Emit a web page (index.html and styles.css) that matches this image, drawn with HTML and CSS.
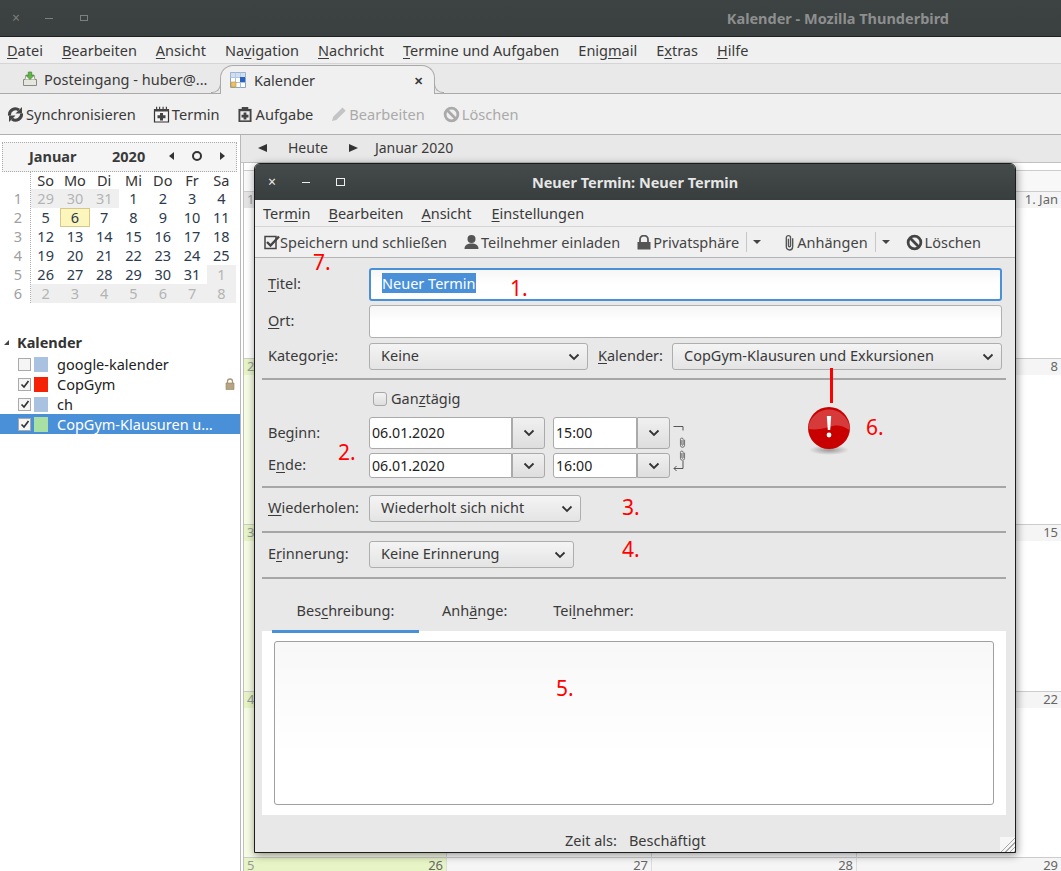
FILE: index.html
```html
<!DOCTYPE html>
<html lang="de">
<head>
    <meta charset="UTF-8">
    <title>Kalender - Mozilla Thunderbird</title>
    <link rel="stylesheet" href="styles.css">
</head>
<body>
    <svg class="defs" width="0" height="0">
        <symbol id="chev" viewBox="0 0 12 8"><path d="M1.5 1.5 6 6l4.5-4.5" fill="none" stroke="#333" stroke-width="1.8"/></symbol>
        <symbol id="nosign" viewBox="0 0 16 16"><circle cx="8" cy="8" r="6" fill="none" stroke="currentColor" stroke-width="2.6"/><path d="M3.8 3.8l8.4 8.4" stroke="currentColor" stroke-width="2.6"/></symbol>
        <symbol id="clip" viewBox="0 0 10 16"><path d="M8 4v8a3 3 0 0 1-6 0V3.500a2 2 0 0 1 4 0V11a1 1 0 0 1-2 0V4.500" fill="none" stroke="currentColor" stroke-width="1.300"/></symbol>
        <symbol id="check" viewBox="0 0 12 12"><path d="M2.5 6.5 5 9l4.5-6" fill="none" stroke="#333" stroke-width="1.7"/></symbol>
    </svg>

    <div class="titlebar">
        <div class="wm-buttons">
            <span class="wm-close">×</span><span class="wm-min"></span><span class="wm-max"></span>
        </div>
        <div class="app-title">Kalender - Mozilla Thunderbird</div>
    </div>

    <div class="menubar">
        <span><u>D</u>atei</span>
        <span><u>B</u>earbeiten</span>
        <span><u>A</u>nsicht</span>
        <span>Na<u>v</u>igation</span>
        <span><u>N</u>achricht</span>
        <span><u>T</u>ermine und Aufgaben</span>
        <span>Enig<u>m</u>ail</span>
        <span>E<u>x</u>tras</span>
        <span><u>H</u>ilfe</span>
    </div>

    <div class="tabbar">
        <div class="tab">
            <svg width="16" height="16" viewBox="0 0 16 16"><path d="M1.5 8.5h13v6h-13z" fill="#e6e6e0" stroke="#8a8a80"/><path d="M3 8.500 4 4h8l1 4.500" fill="#f4f4f0" stroke="#9a9a90"/><path d="M6.300 1h3.400v3.500H12L8 8.500 4 4.500h2.300z" fill="#63b54a" stroke="#3f8a2e" stroke-width=".7"/></svg>
            <span>Posteingang - huber@...</span>
        </div>
        <div class="tab tab-active">
            <svg width="16" height="16" viewBox="0 0 16 16"><path d="M.5.5h15v15H.5z" fill="#fff" stroke="#88a4c8"/><path d="M.5 5.500h15M.5 10.500h15M5.500.5v15M10.500.5v15" stroke="#a8c0dc"/><path d="M.5.5h15v5H.5z" fill="#bcd0e8" opacity=".7"/><path d="M10 5h5v5h-5z" fill="#2a62c4"/><path d="M1 10h5v5H1z" fill="#f0c060" stroke="#c09030" stroke-width=".6"/></svg>
            <span class="tab-label">Kalender</span>
            <span class="tab-close">✕</span>
        </div>
    </div>

    <div class="toolbar">
        <span class="tool tool-sync">
            <svg width="17" height="17" viewBox="0 0 17 17"><path d="M2.500 9.500a6 6 0 0 1 9.500-5.500M14.500 7.500a6 6 0 0 1-9.500 5.500" fill="none" stroke="#454545" stroke-width="3"/><path d="M15 1v6.500H8.500zM2 16V9.500h6.500z" fill="#454545"/></svg>
            Synchronisieren
        </span>
        <span class="tool">
            <svg width="17" height="17" viewBox="0 0 17 17"><path d="M1.500 3.500h14v12.500h-14z" fill="#f4f4f4" stroke="#333" stroke-width="1.200"/><path d="M1 3h15v2.500H1z" fill="#444"/><path d="M3 .8h1.200V3H3zM6 .8h1.200V3H6zM9.500.8h1.200V3H9.500zM12.800.8H14V3h-1.200z" fill="#444"/><path d="M7 7h3v2.300h2.500v3H10v2.200H7v-2.200H4.500v-3H7z" fill="#444"/></svg>
            Termin
        </span>
        <span class="tool tool-task">
            <svg width="14" height="17" viewBox="0 0 15 17"><path d="M.5 2.500h14v14H.5z" fill="#444"/><path d="M4 .5h7v3.800H4z" fill="#444"/><path d="M2.500 5h10v9.800h-10z" fill="#eee"/><path d="M6 6.300h3v2.500h2.200v3H9v2H6v-2H3.800v-3H6z" fill="#444"/></svg>
            Aufgabe
        </span>
        <span class="tool tool-off">
            <svg width="16" height="16" viewBox="0 0 16 16"><path d="M1 15l1.200-4.300L11.500 1.500l3.200 3.200L5.300 14z" fill="#c4c4c4"/></svg>
            Bearbeiten
        </span>
        <span class="tool tool-off">
            <svg width="17" height="17"><use href="#nosign"/></svg>
            Löschen
        </span>
    </div>

    <div class="main">
        <aside class="sidebar">
            <div class="minical-head">
                <span class="mc-month">Januar</span>
                <span class="mc-year">2020</span>
                <span class="mc-arrow mc-left"></span>
                <span class="mc-dot"></span>
                <span class="mc-arrow mc-right"></span>
            </div>
            <div class="minical">
                <div class="mc-weeks">
                    <span></span><span>1</span><span>2</span><span>3</span><span>4</span><span>5</span><span>6</span>
                </div>
                <div class="mc-days">
                    <b>So</b><b>Mo</b><b>Di</b><b>Mi</b><b>Do</b><b>Fr</b><b>Sa</b>
                    <i>29</i><i>30</i><i>31</i><span>1</span><span>2</span><span>3</span><span>4</span>
                    <span>5</span><span class="mc-today">6</span><span>7</span><span>8</span><span>9</span><span>10</span><span>11</span>
                    <span>12</span><span>13</span><span>14</span><span>15</span><span>16</span><span>17</span><span>18</span>
                    <span>19</span><span>20</span><span>21</span><span>22</span><span>23</span><span>24</span><span>25</span>
                    <span>26</span><span>27</span><span>28</span><span>29</span><span>30</span><span>31</span><i>1</i>
                    <i>2</i><i>3</i><i>4</i><i>5</i><i>6</i><i>7</i><i>8</i>
                </div>
            </div>

            <div class="cal-title"><span class="twisty"></span>Kalender</div>
            <ul class="cal-list">
                <li><span class="cb"></span><span class="swatch swatch-blue"></span>google-kalender</li>
                <li>
                    <span class="cb"><svg width="12" height="12"><use href="#check"/></svg></span><span class="swatch swatch-red"></span>CopGym
                    <svg class="lock" width="10" height="12" viewBox="0 0 10 12"><path d="M2.500 5V3.500a2.500 2.500 0 0 1 5 0V5" fill="none" stroke="#a89878" stroke-width="1.300"/><path d="M1 5h8v6.500H1z" fill="#b8a480" stroke="#94835f" stroke-width=".6"/></svg>
                </li>
                <li><span class="cb"><svg width="12" height="12"><use href="#check"/></svg></span><span class="swatch swatch-blue"></span>ch</li>
                <li class="cal-selected"><span class="cb"><svg width="12" height="12"><use href="#check"/></svg></span><span class="swatch swatch-green"></span>CopGym-Klausuren u…</li>
            </ul>
        </aside>

        <section class="calendar">
            <div class="cal-nav">
                <span class="nav-left"></span>
                <span class="nav-today">Heute</span>
                <span class="nav-right"></span>
                <span>Januar 2020</span>
            </div>
            <div class="month">
                <div class="month-head"></div>
                <div class="week week-past"><div class="day"><h4 class="wk">1</h4></div><div class="day"><h4></h4></div><div class="day"><h4></h4></div><div class="day"><h4>1. Jan</h4></div></div>
                <div class="week"><div class="day day-off"><h4 class="wk">2</h4></div><div class="day"><h4></h4></div><div class="day"><h4></h4></div><div class="day"><h4>8</h4></div></div>
                <div class="week"><div class="day day-off"><h4 class="wk">3</h4></div><div class="day"><h4></h4></div><div class="day"><h4></h4></div><div class="day"><h4>15</h4></div></div>
                <div class="week"><div class="day day-off"><h4 class="wk">4</h4></div><div class="day"><h4></h4></div><div class="day"><h4></h4></div><div class="day"><h4>22</h4></div></div>
                <div class="week"><div class="day day-off"><h4 class="wk">5<em>26</em></h4></div><div class="day"><h4>27</h4></div><div class="day"><h4>28</h4></div><div class="day"><h4>29</h4></div></div>
            </div>
        </section>
    </div>

    <div class="dialog">
        <div class="dlg-title">
            <div class="wm-buttons dlg-buttons">
                <span class="wm-close">×</span><span class="wm-min"></span><span class="wm-max"></span>
            </div>
            <div class="dlg-name">Neuer Termin: Neuer Termin</div>
        </div>
        <div class="dlg-menu">
            <span>Ter<u>m</u>in</span>
            <span><u>B</u>earbeiten</span>
            <span><u>A</u>nsicht</span>
            <span><u>E</u>instellungen</span>
        </div>
        <div class="dlg-tools">
            <span class="dtool dtool-save">
                <svg width="16" height="16" viewBox="0 0 16 16"><path d="M1 2.500h11v12H1z" fill="none" stroke="#444" stroke-width="1.500"/><path d="M3 8l3.500 3.500L15 2.500" fill="none" stroke="#444" stroke-width="2.400"/></svg>
                Speichern und schließen
            </span>
            <span class="dtool">
                <svg width="15" height="16" viewBox="0 0 15 16"><circle cx="7.500" cy="5" r="4" fill="#555"/><path d="M.5 15c0-4 3-5.500 7-5.500s7 1.500 7 5.500z" fill="#555"/></svg>
                Teilnehmer einladen
            </span>
            <span class="dtool dtool-menu">
                <svg width="14" height="15" viewBox="0 0 14 15"><path d="M3 7V4.500a4 4 0 0 1 8 0V7" fill="none" stroke="#555" stroke-width="1.800"/><path d="M.5 7h13v7.500H.5z" fill="#555"/></svg>
                Privatsphäre
                <span class="dd"></span>
            </span>
            <span class="dtool dtool-attach">
                <svg class="clip-icon" width="11" height="17"><use href="#clip"/></svg>
                Anhängen
                <span class="dd"></span>
            </span>
            <span class="dtool">
                <svg width="17" height="17"><use href="#nosign"/></svg>
                Löschen
            </span>
        </div>

        <div class="form">
            <div class="row row-title">
                <label><u>T</u>itel:</label>
                <div class="text-box text-focus"><span class="selected">Neuer Termin</span></div>
            </div>
            <div class="row row-ort">
                <label><u>O</u>rt:</label>
                <div class="text-box"></div>
            </div>
            <div class="row row-cat">
                <label>Kategor<u>i</u>e:</label>
                <div class="select select-cat">Keine<svg width="12" height="8"><use href="#chev"/></svg></div>
                <label class="label-cal"><u>K</u>alender:</label>
                <div class="select select-cal">CopGym-Klausuren und Exkursionen<svg width="12" height="8"><use href="#chev"/></svg></div>
            </div>
            <hr class="sep">
            <div class="row row-allday">
                <label></label>
                <span class="allday"><span class="checkbox"></span>Gan<u>z</u>tägig</span>
            </div>
            <div class="row row-begin">
                <label>Be<u>g</u>inn:</label>
                <div class="dt dt-date">06.01.2020</div><div class="dt-btn"><svg width="12" height="8"><use href="#chev"/></svg></div>
                <div class="dt dt-time">15:00</div><div class="dt-btn"><svg width="12" height="8"><use href="#chev"/></svg></div>
                <svg class="link" width="15" height="48" viewBox="0 0 15 48"><path d="M.5 1.500h9.500v4" fill="none" stroke="#555"/><g color="#666"><use href="#clip" x="6" y="12" width="7" height="11"/><use href="#clip" x="6" y="25" width="7" height="11"/></g><path d="M10 36v7.500H1M3.500 41 1 43.500 3.500 46" fill="none" stroke="#555"/></svg>
            </div>
            <div class="row row-end">
                <label>E<u>n</u>de:</label>
                <div class="dt dt-date">06.01.2020</div><div class="dt-btn"><svg width="12" height="8"><use href="#chev"/></svg></div>
                <div class="dt dt-time">16:00</div><div class="dt-btn"><svg width="12" height="8"><use href="#chev"/></svg></div>
            </div>
            <hr class="sep sep-dates">
            <div class="row row-repeat">
                <label><u>W</u>iederholen:</label>
                <div class="select select-repeat">Wiederholt sich nicht<svg width="12" height="8"><use href="#chev"/></svg></div>
            </div>
            <hr class="sep sep-repeat">
            <div class="row row-remind">
                <label>E<u>r</u>innerung:</label>
                <div class="select select-remind">Keine Erinnerung<svg width="12" height="8"><use href="#chev"/></svg></div>
            </div>
            <hr class="sep sep-repeat">
        </div>

        <div class="tabs">
            <span class="dtab dtab-on">Bes<u>c</u>hreibung:</span>
            <span class="dtab">Anh<u>ä</u>nge:</span>
            <span class="dtab">Tei<u>l</u>nehmer:</span>
        </div>
        <div class="panel">
            <div class="desc"></div>
        </div>
        <div class="status"><span>Zeit als:</span><span>Beschäftigt</span></div>
        <div class="grip"></div>
    </div>

    <span class="note note-1">1.</span>
    <span class="note note-2">2.</span>
    <span class="note note-3">3.</span>
    <span class="note note-4">4.</span>
    <span class="note note-5">5.</span>
    <span class="note note-6">6.</span>
    <span class="note note-7">7.</span>
    <div class="red-line"></div>
    <svg class="alert" width="48" height="50" viewBox="0 0 48 50">
        <defs>
            <radialGradient id="shadow"><stop offset="0" stop-color="#000" stop-opacity=".35"/><stop offset="1" stop-color="#000" stop-opacity="0"/></radialGradient>
        </defs>
        <ellipse cx="24" cy="44" rx="20" ry="5" fill="url(#shadow)"/>
        <circle cx="24" cy="22" r="21" fill="#c80000"/>
        <path d="M3.500 20a21 21 0 0 1 41 0 3 3 0 0 1-.2 4C36 18 30 19 24 21 17 23 10 24 3.600 23z" fill="#d63a3a"/>
        <path d="M21.800 10h4.400l-1 14h-2.400z" fill="#fff"/>
        <circle cx="24" cy="29" r="2.400" fill="#fff"/>
    </svg>
</body>
</html>
```

FILE: styles.css
```css
* {
    box-sizing: border-box;
}

html, body {
    height: 100%;
}

body {
    margin: 0;
    width: 1061px;
    height: 871px;
    overflow: hidden;
    position: relative;
    display: flex;
    flex-direction: column;
    font-family: "Noto Sans", sans-serif;
    font-size: 14.5px;
    color: #3a3a3a;
    background-color: #fff;
}

u {
    text-underline-offset: 2px;
}

svg {
    flex: none;
}

.defs {
    position: absolute;
}

/* window title */
.titlebar {
    height: 37px;
    flex: none;
    display: flex;
    align-items: center;
    justify-content: space-between;
    padding-right: 112px;
    background: linear-gradient(#3d4243, #3a3f3f);
    border-bottom: 1px solid #1f2222;
}

.app-title {
    font-weight: bold;
    color: #8d8f8f;
}

.wm-buttons {
    display: flex;
    align-items: center;
    width: 90px;
    margin-left: 11px;
    color: #7b7f7f;
}

.wm-close {
    width: 10px;
    margin-right: 24px;
    line-height: 14px;
    text-align: center;
    font-size: 14px;
}

.wm-min {
    width: 8px;
    height: 1px;
    margin-right: 27px;
    background-color: currentColor;
}

.wm-max {
    width: 8px;
    height: 6px;
    border: 1px solid currentColor;
}

/* menus */
.menubar {
    height: 27px;
    flex: none;
    display: flex;
    align-items: center;
    gap: 19px;
    padding-left: 7px;
    background-color: #f0f0f0;
    border-bottom: 1px solid #d5d5d5;
}

.tabbar {
    height: 30px;
    flex: none;
    display: flex;
    padding-top: 1px;
    background-color: #e9e9e9;
    border-bottom: 1px solid #aaa;
}

.tab {
    width: 197px;
    padding-left: 22px;
    display: flex;
    align-items: center;
    gap: 6px;
    white-space: nowrap;
}

.tab-active {
    width: 215px;
    height: 29px;
    padding-left: 9px;
    gap: 8px;
    margin-left: 23px;
    position: relative;
    background-color: #f0f0f0;
    border: 1px solid #aaa;
    border-bottom: none;
    border-radius: 13px 13px 0 0;
}

.tab-active::before, .tab-active::after {
    content: "";
    position: absolute;
    bottom: 1px;
    width: 9px;
    height: 9px;
    border-bottom: 1px solid #aaa;
}

.tab-active::before {
    left: -10px;
    border-right: 1px solid #aaa;
    border-radius: 0 0 9px 0;
}

.tab-active::after {
    right: -10px;
    border-left: 1px solid #aaa;
    border-radius: 0 0 0 9px;
}

.tab-label {
    flex: 1;
}

.tab-close {
    margin-right: 11px;
    font-size: 11px;
    font-weight: bold;
}

.toolbar {
    height: 41px;
    flex: none;
    display: flex;
    align-items: center;
    gap: 18px;
    padding-left: 7px;
    font-size: 14.6px;
    background-color: #f0f0f0;
    border-bottom: 1px solid #b0b0b0;
}

.tool {
    display: flex;
    align-items: center;
    gap: 2px;
}

.tool-sync {
    margin-right: -1px;
}

.tool-task {
    gap: 4px;
}

.tool-off {
    color: #aaa;
}

/* below the toolbars */
.main {
    flex: 1;
    display: flex;
    min-height: 0;
    overflow: hidden;
}

.sidebar {
    width: 241px;
    flex: none;
    padding-top: 7px;
    border-right: 1px solid #b8b8b8;
    background-color: #fff;
}

.minical-head {
    height: 30px;
    margin: 0 3px 0 2px;
    padding-bottom: 2px;
    display: flex;
    align-items: center;
    background-color: #f5f5f5;
    border: 1px dotted #aaa;
    font-weight: bold;
}

.mc-month {
    width: 82px;
    padding-left: 26px;
}

.mc-year {
    width: 57px;
    margin-left: 27px;
}

.mc-arrow {
    width: 0;
    height: 0;
    border-top: 4px solid transparent;
    border-bottom: 4px solid transparent;
}

.mc-left {
    border-right: 5px solid #333;
}

.mc-right {
    border-left: 5px solid #333;
}

.mc-dot {
    width: 10px;
    height: 10px;
    margin: 0 18px 0 18px;
    border: 2px solid #333;
    border-radius: 50%;
}

.minical {
    display: flex;
    margin-right: 4px;
}

.mc-weeks {
    width: 31px;
    display: grid;
    grid-template-rows: 17px repeat(6, 19px);
    line-height: 19px;
    color: #a0a0a0;
    border-right: 1px dotted #aaa;
    padding-right: 8px;
    text-align: right;
}

.mc-days {
    flex: 1;
    display: grid;
    grid-template-columns: repeat(7, 1fr);
    grid-template-rows: 17px repeat(6, 19px);
    text-align: center;
    line-height: 19px;
    color: #2c3a4c;
}

.mc-days b {
    font-weight: normal;
    line-height: 17px;
    color: #333;
}

.mc-days i {
    font-style: normal;
    color: #b4b4b4;
    background-color: #efefef;
}

.mc-today {
    background-color: #fdf6bc;
    border: 1px solid #d6c88a;
    line-height: 17px;
}

.cal-title {
    margin-top: 29px;
    height: 20px;
    padding-left: 4px;
    display: flex;
    align-items: center;
    font-weight: bold;
    color: #333;
}

.twisty {
    width: 0;
    height: 0;
    margin-right: 8px;
    border-style: solid;
    border-width: 0 0 5px 5px;
    border-color: transparent transparent #444 transparent;
}

.cal-list {
    list-style: none;
    margin: 2px 0 0;
    padding: 0;
}

.cal-list li {
    height: 20px;
    display: flex;
    align-items: center;
    padding-left: 18px;
    color: #222;
}

.cal-list .cal-selected {
    background-color: #4a90d9;
    color: #fff;
}

.cb {
    width: 13px;
    height: 13px;
    margin-right: 3px;
    border: 1px solid #aaa;
    background-color: #f5f5f5;
    display: flex;
    align-items: center;
    justify-content: center;
}

.swatch {
    width: 14px;
    height: 15px;
    margin-right: 9px;
}

.swatch-blue {
    background-color: #a8c2e0;
}

.swatch-red {
    background-color: #f52205;
}

.swatch-green {
    background-color: #a8e0a4;
}

.lock {
    margin-left: auto;
    margin-right: 5px;
}

/* calendar behind the dialog */
.calendar {
    flex: 1;
    display: flex;
    flex-direction: column;
    min-width: 0;
}

.cal-nav {
    height: 28px;
    flex: none;
    display: flex;
    align-items: center;
    padding: 0 0 2px 17px;
    font-size: 14px;
    background-color: #e8e8e8;
    border-bottom: 1px solid #c0c0c0;
}

.nav-left, .nav-right {
    width: 0;
    height: 0;
    border-top: 4px solid transparent;
    border-bottom: 4px solid transparent;
}

.nav-left {
    border-right: 9px solid #333;
}

.nav-right {
    border-left: 9px solid #333;
    margin-right: 17px;
}

.nav-today {
    margin: 0 21px 0 21px;
}

.month {
    flex: 1;
    min-height: 0;
    overflow: hidden;
    margin-left: 2px;
    border-left: 1px solid #c0c0c0;
}

.month-head {
    height: 21px;
    margin-top: 7px;
    background-color: #f8f8f8;
    border-top: 1px solid #ccc;
}

.week {
    height: 166.3px;
    display: grid;
    grid-template-columns: 203px 205px 205px 205px;
}

.week-past {
    height: 167px;
}

.day {
    border-right: 1px solid #ddd;
    border-top: 1px solid #ccc;
    background-color: #fff;
}

.day h4 {
    margin: 0;
    height: 16px;
    padding: 0 3px;
    display: flex;
    justify-content: flex-end;
    font-size: 13px;
    font-weight: normal;
    line-height: 14px;
    color: #666;
    background-color: #f5f5f5;
}

.day-off {
    background-color: #f6fbe4;
}

.day-off h4 {
    background-color: #e6f4c6;
}

.week-past .day:first-child h4 {
    background-color: #e4e4e4;
}

.day h4.wk {
    justify-content: space-between;
    color: #999;
}

.day h4 em {
    font-style: normal;
    color: #666;
}

/* event dialog */
.dialog {
    position: absolute;
    left: 254px;
    top: 163px;
    width: 762px;
    height: 690px;
    display: flex;
    flex-direction: column;
    background-color: #e8e8e8;
    border: 1px solid #1c1c1c;
    border-radius: 6px 6px 0 0;
    box-shadow: 1px 2px 8px rgba(0, 0, 0, 0.45);
}

.dlg-title {
    height: 36px;
    flex: none;
    position: relative;
    display: flex;
    align-items: center;
    justify-content: center;
    background: linear-gradient(#454b4b, #383d3d);
    border-radius: 5px 5px 0 0;
}

.dlg-buttons {
    position: absolute;
    left: 1px;
    top: 11px;
    color: #eee;
}

.dlg-buttons .wm-min {
    margin-right: 26px;
}

.dlg-buttons .wm-close {
    margin-right: 25px;
}

.dlg-buttons .wm-max {
    width: 9px;
    height: 8px;
}

.dlg-name {
    font-weight: bold;
    color: #e6e6e6;
}

.dlg-menu {
    height: 27px;
    flex: none;
    display: flex;
    align-items: center;
    gap: 18px;
    padding-left: 8px;
    background-color: #f0f0f0;
    border-bottom: 1px solid #d5d5d5;
}

.dlg-menu span:last-child {
    margin-left: 2px;
}

.dlg-tools {
    height: 31px;
    flex: none;
    display: flex;
    align-items: center;
    padding-left: 9px;
    background-color: #f0f0f0;
    border-bottom: 1px solid #b5b5b5;
}

.dtool {
    display: flex;
    align-items: center;
    gap: 2px;
    margin-right: 17px;
    white-space: nowrap;
    color: #444;
}

.dtool-save {
    gap: 0;
}

.dtool-menu {
    margin-right: 23px;
}

.dtool-attach {
    margin-right: 16px;
}

.dd {
    height: 20px;
    margin-left: 5px;
    padding-left: 6px;
    border-left: 1px solid #c8c8c8;
    display: flex;
    align-items: center;
}

.dd::after {
    content: "";
    border-style: solid;
    border-width: 4px 4px 0;
    border-color: #444 transparent transparent;
}

.clip-icon {
    color: #555;
}

.form {
    flex: none;
    padding-top: 10px;
}

.row {
    display: flex;
    align-items: center;
    padding-left: 13px;
}

.row label {
    width: 101px;
    flex: none;
    padding-bottom: 3px;
}

.row-title {
    height: 33px;
}

.row-ort {
    height: 33px;
    margin-top: 4px;
}

.row-cat {
    height: 27px;
    margin-top: 5px;
}

.text-box {
    width: 633px;
    height: 100%;
    padding-left: 12px;
    padding-bottom: 3px;
    display: flex;
    align-items: center;
    background: linear-gradient(#f6f6f6, #fff 50%);
    border: 1px solid #b0b0b0;
    border-radius: 3px;
}

.text-focus {
    border: 2px solid #4a90d9;
    padding-left: 11px;
}

.selected {
    background-color: #4a90d9;
    color: #fff;
}

.select {
    height: 27px;
    display: flex;
    align-items: center;
    justify-content: space-between;
    padding: 0 7px 3px 11px;
    background: linear-gradient(#f4f4f4, #e4e4e4);
    border: 1px solid #aeaeae;
    border-radius: 3px;
}

.select svg {
    margin-top: 3px;
}

.select-cat {
    width: 219px;
}

.row .label-cal {
    width: 74px;
    margin-left: 10px;
}

.select-cal {
    width: 330px;
}

.select-repeat {
    width: 212px;
}

.select-remind {
    width: 205px;
}

.sep {
    height: 2px;
    margin: 8px 9px 0 7px;
    border: none;
    background-color: #a6a6a6;
}

.row-allday {
    height: 18px;
    margin-top: 10px;
}

.allday {
    display: flex;
    align-items: center;
    margin-left: 4px;
    padding-bottom: 2px;
}

.checkbox {
    width: 14px;
    height: 14px;
    margin-top: 2px;
    margin-right: 4px;
    background: linear-gradient(#f2f2f2, #dedede);
    border: 1px solid #a8a8a8;
    border-radius: 3px;
}

.row-begin {
    height: 32px;
    margin-top: 9px;
    position: relative;
}

.row-end {
    height: 25px;
    margin-top: 4px;
}

.dt {
    height: 100%;
    padding: 0 0 1px 2px;
    display: flex;
    align-items: center;
    background-color: #fff;
    border: 1px solid #aaa;
    border-radius: 3px 0 0 3px;
    font-size: 14.2px;
    color: #222;
}

.dt-date {
    width: 143px;
}

.dt-time {
    width: 84px;
    margin-left: 8px;
}

.dt-btn {
    width: 33px;
    height: 100%;
    display: flex;
    align-items: center;
    justify-content: center;
    background: linear-gradient(#f0f0f0, #dedede);
    border: 1px solid #aaa;
    border-radius: 0 3px 3px 0;
}

.link {
    position: absolute;
    left: 418px;
    top: 8px;
}

.sep-dates {
    margin-top: 8px;
}

.row-repeat {
    margin-top: 7px;
}

.sep-repeat {
    margin-top: 9px;
}

.row-remind {
    margin-top: 8px;
}

.tabs {
    height: 31px;
    margin-top: 21px;
    flex: none;
    display: flex;
    padding-left: 17px;
    position: relative;
    z-index: 1;
}

.dtab {
    padding: 0 23px;
    line-height: 20px;
}

.dtab-on {
    width: 147px;
    padding: 0;
    text-align: center;
    border-bottom: 3px solid #4a90d9;
    height: 33px;
}

.panel {
    height: 184px;
    margin: 0 9px 0 7px;
    padding: 10px 12px;
    background-color: #fff;
    flex: none;
}

.desc {
    height: 100%;
    background: linear-gradient(#f8f8f8, #fff 70%);
    border: 1px solid #a0a0a0;
    border-radius: 3px;
}

.status {
    display: flex;
    gap: 12px;
    padding-left: 310px;
    margin-top: 16px;
    line-height: 19px;
}

.grip {
    position: absolute;
    right: 0;
    bottom: 0;
    width: 15px;
    height: 15px;
    background:
        linear-gradient(135deg, #f6f6f6 50%, transparent 50%),
        repeating-linear-gradient(135deg, #f6f6f6 0 2px, #a8a8a8 2px 3px);
}

/* red notes drawn on the screenshot */
.note {
    position: absolute;
    font-size: 21px;
    line-height: 18px;
    color: #f00;
}

.note-1 { left: 510px; top: 279px; }
.note-2 { left: 338px; top: 443px; }
.note-3 { left: 622px; top: 498px; }
.note-4 { left: 622px; top: 540px; }
.note-5 { left: 556px; top: 679px; }
.note-6 { left: 866px; top: 418px; }
.note-7 { left: 313px; top: 253px; }

.red-line {
    position: absolute;
    left: 830px;
    top: 368px;
    width: 3px;
    height: 35px;
    background-color: #f00;
}

.alert {
    position: absolute;
    left: 805px;
    top: 406px;
}
```
